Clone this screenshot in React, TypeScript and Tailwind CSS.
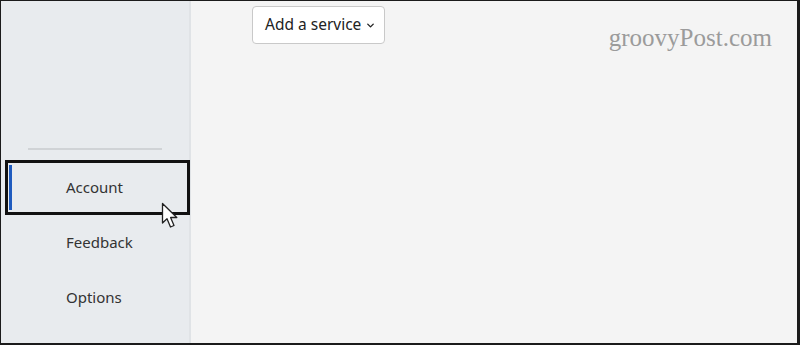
import { ChevronDown } from 'lucide-react';

const NavItem = ({ label, active }: { label: string; active?: boolean }) => {
  if (active) {
    return (
      <div className="relative ml-[4px] mr-[-1px] h-[55px] border-[3px] border-[#111] flex items-center">
        <span className="absolute left-[1px] top-[2px] bottom-[2px] w-[3px] bg-[#1f5bbf]" />
        <span className="pl-[58px] text-[15px] text-[#333]">{label}</span>
      </div>
    );
  }
  return (
    <div className="h-[55px] flex items-center">
      <span className="pl-[65px] text-[15px] text-[#333]">{label}</span>
    </div>
  );
};

const Cursor = () => (
  <svg
    className="absolute left-[160px] top-[201px]"
    width="20"
    height="28"
    viewBox="0 0 20 28"
  >
    <path
      d="M1.5 1.5 L1.5 21 L6 16.8 L9.5 25 L13 23.5 L9.6 15.5 L15.8 15.5 Z"
      fill="#fff"
      stroke="#222"
      strokeWidth="1.3"
      strokeLinejoin="round"
    />
  </svg>
);

export default function App() {
  return (
    <div
      className="relative w-[800px] h-[345px] border-t border-l border-r-[3px] border-b-[2px] border-[#1b1b1b] flex overflow-hidden"
      style={{ fontFamily: '"Noto Sans", "Open Sans", sans-serif' }}
    >
      <aside className="w-[190px] shrink-0 bg-[#e8ebee] border-r-[2px] border-[#e0e3e6] pt-[147px] flex flex-col">
        <div className="mx-[27px] h-[2px] bg-[#d0d3d6] mb-[10px]" />
        <NavItem label="Account" active />
        <NavItem label="Feedback" />
        <NavItem label="Options" />
      </aside>
      <main className="flex-1 bg-[#f4f4f4] relative">
        <div className="pt-[5px] pl-[61px] flex items-start justify-between pr-[25px]">
          <button className="h-[38px] pl-[12px] pr-[8px] bg-white border border-[#c9c9c9] rounded-[4px] flex items-center gap-[4px] text-[15.5px] text-[#222]">
            Add a service
            <ChevronDown size={11} strokeWidth={3} className="mt-[1px]" />
          </button>
          <span
            className="mt-[19px] text-[25px] text-[#9b9b9b] leading-none"
            style={{ fontFamily: '"Liberation Serif", serif' }}
          >
            groovyPost.com
          </span>
        </div>
      </main>
      <Cursor />
    </div>
  );
}
